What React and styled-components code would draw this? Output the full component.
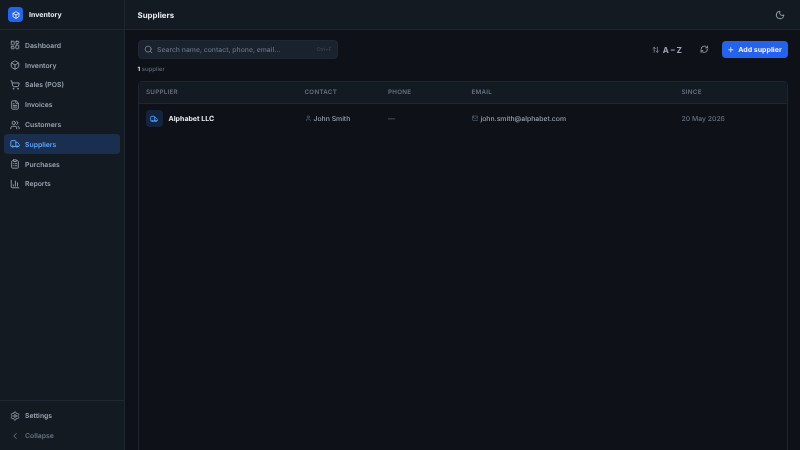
import React from "react";
import styled, { createGlobalStyle } from "styled-components";
import { LayoutDashboard, Box, ShoppingCart, FileText, Users, Truck, ClipboardList, BarChart3, Settings, ChevronLeft, Search, ArrowUpDown, RefreshCw, Plus, Moon, User, Mail } from "lucide-react";

const Global = createGlobalStyle`
  html, body { margin: 0; padding: 0; width: 800px; height: 450px; overflow: hidden; background: #0e1117; }
  * { box-sizing: border-box; }
  body { font-family: Inter, "Liberation Sans", sans-serif; text-rendering: geometricPrecision; }
  svg { stroke-width: 2.4; }
`;
const Shell = styled.div`display: flex; width: 800px; height: 450px; overflow: hidden; background: #0e1117; will-change: transform;`;
const Sidebar = styled.aside`width: 125px; flex: none; display: flex; flex-direction: column; background: #141a21; border-right: 1px solid #1f262f;`;
const Brand = styled.div`height: 30px; flex: none; display: flex; align-items: center; gap: 6px; padding: 0 8px; border-bottom: 1px solid #1f262f;`;
const Logo = styled.div`width: 15px; height: 15px; border-radius: 4px; background: #2563eb; display: flex; align-items: center; justify-content: center; color: #fff;`;
const BrandName = styled.span`font-size: 7px; font-weight: 700; color: #e5e9ef;`;
const Nav = styled.nav`flex: 1; display: flex; flex-direction: column; padding: 5.5px 4px 0;`;
const NavItem = styled.div`
  height: 19.8px; display: flex; align-items: center; gap: 5.5px; padding: 0 5.5px; border-radius: 4px;
  font-size: 6.85px; font-weight: 600; color: ${p => p.$active ? "#5ba3f7" : p.$dim ? "#667180" : "#98a2af"};
  background: ${p => p.$active ? "#1a2f4f" : "transparent"};
  svg { width: 10px; height: 10px; flex: none; color: ${p => p.$active ? "#5ba3f7" : p.$dim ? "#667180" : "#8b95a2"}; }
`;
const Foot = styled.div`flex: none; height: 50.5px; padding: 5.5px 4px 0; border-top: 1px solid #1f262f; display: flex; flex-direction: column;`;
const Main = styled.main`flex: 1; min-width: 0; display: flex; flex-direction: column;`;
const Header = styled.header`height: 30px; flex: none; display: flex; align-items: center; justify-content: space-between; padding: 0 15px 0 12.5px; background: #141a21; border-bottom: 1px solid #1f262f;`;
const Title = styled.h1`margin: 0; font-size: 7.9px; font-weight: 700; color: #e5e9ef;`;
const IconBtn = styled.span`display: flex; color: ${p => p.$c || "#9aa4b0"}; svg { width: ${p => p.$s || 10}px; height: ${p => p.$s || 10}px; }`;
const Content = styled.div`flex: 1; min-height: 0; display: flex; flex-direction: column; padding: 10px 12.5px 0;`;
const Toolbar = styled.div`display: flex; align-items: center; justify-content: space-between; height: 19px;`;
const SearchBox = styled.div`width: 200px; height: 19px; border-radius: 4px; background: #1a222e; border: 1px solid #1f2833; display: flex; align-items: center; gap: 4.5px; padding: 0 5px;
  svg { width: 9px; height: 9px; color: #76818e; flex: none; }`;
const Placeholder = styled.span`flex: 1; font-size: 6.85px; font-weight: 500; color: #667180; white-space: nowrap;`;
const Kbd = styled.span`font-size: 5px; font-weight: 500; color: #3f4854;`;
const Actions = styled.div`display: flex; align-items: center;`;
const SortBtn = styled.div`display: flex; align-items: center; gap: 3px; font-size: 8.1px; font-weight: 700; color: #9ea8b4; margin-right: 18px;
  svg { width: 7.5px; height: 7.5px; color: #8e98a5; }`;
const AddBtn = styled.div`margin-left: 13px; width: 66px; height: 17px; border-radius: 4px; background: #2563eb; color: #eef3fd; display: flex; align-items: center; justify-content: center; gap: 3.5px; font-size: 7px; font-weight: 700;
  svg { width: 7.5px; height: 7.5px; }`;
const Count = styled.div`margin-top: 6px; height: 10px; line-height: 10px; font-size: 6px; font-weight: 500; color: #5d6875; b { color: #d6dbe2; font-weight: 800; }`;
const Card = styled.div`margin-top: 6px; flex: 1; border: 1px solid #1f262f; border-bottom: 0; border-radius: 5px 5px 0 0; overflow: hidden;`;
const Row = styled.div`display: grid; grid-template-columns: 158.5px 83.5px 83.5px 210px 1fr; align-items: center; padding-left: 7.5px;`;
const HeadRow = styled(Row)`height: 21.5px; background: #141a21; border-bottom: 1px solid #1f262f;`;
const Th = styled.span`font-size: 6.25px; font-weight: 600; letter-spacing: .25px; color: #66717f;`;
const BodyRow = styled(Row)`height: 30px;`;
const NameCell = styled.div`display: flex; align-items: center; gap: 6px;`;
const RowIcon = styled.div`width: 16.5px; height: 16.5px; border-radius: 4px; background: #14243f; color: #5ba3f7; display: flex; align-items: center; justify-content: center; svg { width: 8px; height: 8px; }`;
const Name = styled.span`font-size: 7px; font-weight: 700; color: #e6eaef;`;
const Cell = styled.div`display: flex; align-items: center; gap: 2.5px; font-size: 6.85px; font-weight: 500; color: ${p => p.$muted ? "#66717f" : "#98a2af"}; svg { width: 6.5px; height: 6.5px; color: #5d6875; flex: none; }`;

const items = [["Dashboard", LayoutDashboard], ["Inventory", Box], ["Sales (POS)", ShoppingCart], ["Invoices", FileText], ["Customers", Users], ["Suppliers", Truck], ["Purchases", ClipboardList], ["Reports", BarChart3]];

export default function App() {
  return (
    <Shell>
      <Global />
      <Sidebar>
        <Brand><Logo><Box size={8} /></Logo><BrandName>Inventory</BrandName></Brand>
        <Nav>
          {items.map(([label, I]) => <NavItem key={label} $active={label === "Suppliers"}><I />{label}</NavItem>)}
        </Nav>
        <Foot>
          <NavItem><Settings />Settings</NavItem>
          <NavItem $dim><ChevronLeft />Collapse</NavItem>
        </Foot>
      </Sidebar>
      <Main>
        <Header><Title>Suppliers</Title><IconBtn><Moon /></IconBtn></Header>
        <Content>
          <Toolbar>
            <SearchBox><Search /><Placeholder>Search name, contact, phone, email...</Placeholder><Kbd>Ctrl+F</Kbd></SearchBox>
            <Actions>
              <SortBtn><ArrowUpDown />A – Z</SortBtn>
              <IconBtn $s={8.5}><RefreshCw /></IconBtn>
              <AddBtn><Plus />Add supplier</AddBtn>
            </Actions>
          </Toolbar>
          <Count><b>1</b> supplier</Count>
          <Card>
            <HeadRow><Th>SUPPLIER</Th><Th>CONTACT</Th><Th>PHONE</Th><Th>EMAIL</Th><Th>SINCE</Th></HeadRow>
            <BodyRow>
              <NameCell><RowIcon><Truck /></RowIcon><Name>Alphabet LLC</Name></NameCell>
              <Cell><User />John Smith</Cell>
              <Cell $muted>—</Cell>
              <Cell><Mail />john.smith@alphabet.com</Cell>
              <Cell $muted>20 May 2026</Cell>
            </BodyRow>
          </Card>
        </Content>
      </Main>
    </Shell>
  );
}
